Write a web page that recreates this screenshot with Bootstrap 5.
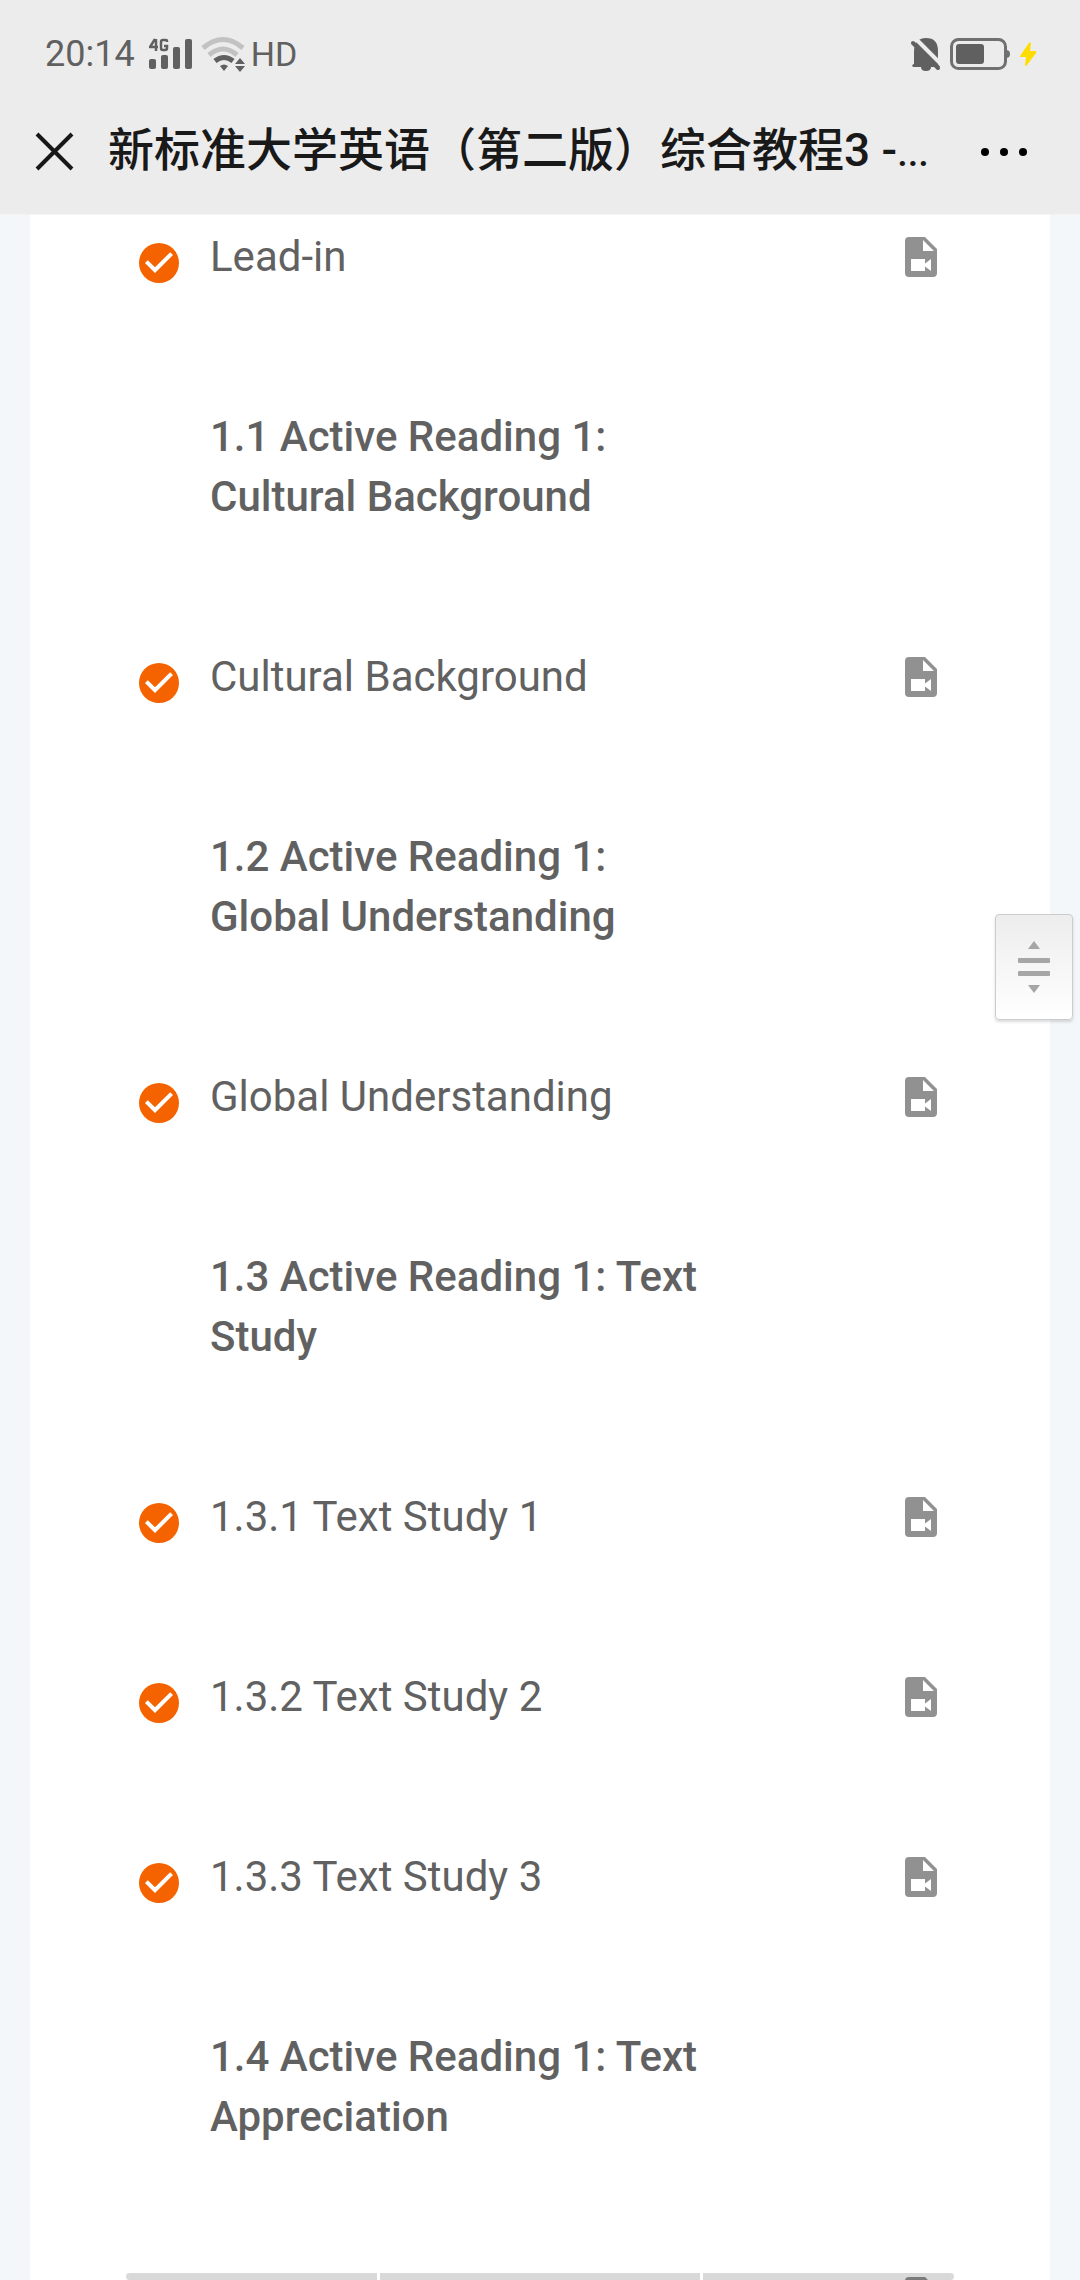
<!DOCTYPE html>
<html lang="zh-CN">
<head>
<meta charset="utf-8">
<meta name="viewport" content="width=device-width, initial-scale=1">
<title>新标准大学英语（第二版）综合教程3</title>
<link rel="stylesheet" href="https://cdn.jsdelivr.net/npm/bootstrap@5.3.0/dist/css/bootstrap.min.css">
<style>
body { font-family: Roboto, "Noto Sans CJK SC", sans-serif; background: #f3f7fa; color: #616161; }
.top-area { background: #ececec; height: 215px; border-bottom: 1px solid #f4f4f4; }
.status-row { height: 108px; padding: 0 43px 0 45px; font-size: 36px; line-height: 60px; color: #606060; }
.status-row svg, .title-row svg, .lesson svg { display: block; flex: none; }
.status-hd { font-size: 34px; margin-left: 6px; }
.signal { margin-left: 14px; }
.title-row { height: 106px; padding: 0 48px 20px 30px; gap: 30px; color: #191919; }
.title-text { font-size: 46px; line-height: 60px; font-weight: 500; margin: 0; }
.title-dots { font-size: 38px; }
.icon-btn { padding: 0; border: 0; background: none; color: #111; }
.course-panel { margin: 0 30px; padding: 12px 105px 0; }
.lesson-list { gap: 120px; font-size: 42px; line-height: 60px; }
.lesson { color: inherit; text-decoration: none; gap: 27px; min-height: 60px; }
.lesson .done { color: #f56200; margin-top: 12px; }
.lesson .media { color: #919191; margin-top: 6px; }
.unit-title { font-size: 42px; line-height: 60px; font-weight: 500; margin: 0; padding: 0 230px 0 75px; }
.drag-handle { position: fixed; right: 7px; top: 914px; width: 78px; height: 106px; padding: 0; border: 1px solid #ccc; border-radius: 4px; background: linear-gradient(#ededed, #fff); box-shadow: 0 2px 3px rgba(0,0,0,.14); }
.gesture-bar { position: fixed; left: 126px; right: 126px; bottom: 0; height: 7px; gap: 3px; }
.gesture-bar span { background: rgba(0,0,0,.15); }
.gesture-bar span:first-child { width: 251px; border-radius: 4px 0 0 4px; }
.gesture-bar span:last-child { width: 251px; border-radius: 0 4px 4px 0; }
</style>
<script src="https://cdn.jsdelivr.net/npm/bootstrap@5.3.0/dist/js/bootstrap.bundle.min.js"></script>
</head>
<body class="vh-100 overflow-hidden d-flex flex-column">
<svg class="d-none" aria-hidden="true">
  <symbol id="i-check" viewBox="0 0 24 24"><path fill="currentColor" d="M12 2a10 10 0 1 0 0 20 10 10 0 0 0 0-20zM10 17l-5-5 1.410-1.410L10 14.170l7.590-7.590L19 8z"/></symbol>
  <symbol id="i-video" viewBox="0 0 24 24"><path fill="currentColor" d="M13 9h5.500L13 3.500V9M6 2h8l6 6v12a2 2 0 0 1-2 2H6a2 2 0 0 1-2-2V4a2 2 0 0 1 2-2m11 17v-6l-3 2.200V13H7v6h7v-2.200l3 2.200z"/></symbol>
</svg>

<header class="top-area flex-shrink-0">
  <div class="status-row d-flex align-items-center justify-content-between">
    <div class="d-flex align-items-center">
      <span>20:14</span>
      <svg class="signal" width="44" height="34" viewBox="0 0 44 34" fill="#606060" aria-hidden="true">
        <rect x="0" y="22" width="7" height="10" rx="2"/><rect x="12" y="18" width="7" height="14" rx="2"/><rect x="24" y="10" width="7" height="22" rx="2"/><rect x="36" y="2" width="7" height="30" rx="2"/>
        <path d="M6 2L1 10h8M7 2v12M18 5V4q0-1-1-1h-3q-2 0-2 2v6q0 2 2 2h2q2 0 2-2V9h-3" fill="none" stroke="#606060" stroke-width="2.500"/>
      </svg>
      <svg class="ms-2" width="44" height="36" viewBox="0 0 44 36" fill="none" stroke-width="5" aria-hidden="true">
        <path d="M2 12Q22-5 42 12" stroke="#c2c2c2"/><path d="M8 19Q22 7 36 19" stroke="#c2c2c2"/><path d="M14 25Q23 18 32 25" stroke="#606060"/>
        <path d="M19 30q4-3 8 0l-4 5zM34 28l5-6 5 6zM34 30h10l-5 6z" fill="#606060"/>
      </svg>
      <span class="status-hd">HD</span>
    </div>
    <div class="d-flex align-items-center">
      <svg width="32" height="36" viewBox="0 0 32 36" fill="#606060" aria-hidden="true">
        <path d="M4 28V16Q4 2 16 2t12 13v13l2 3h-9q0 4-5 4t-5-4H3q-2-2 1-3z"/>
        <path d="M6 3l27 27" stroke="#ececec" stroke-width="4"/><path d="M0 0h6L4 12H0z" fill="#ececec"/><path d="M3 7l25 25" stroke="#606060" stroke-width="4" stroke-linecap="round"/>
      </svg>
      <svg class="ms-2" width="61" height="34" viewBox="0 0 61 34" aria-hidden="true">
        <rect x="1.500" y="2.500" width="54" height="29" rx="7" fill="none" stroke="#707070" stroke-width="3"/><rect x="6" y="7" width="28" height="20" rx="3" fill="#606060"/><path d="M56 13q4 0 4 4t-4 4z" fill="#707070"/>
      </svg>
      <svg class="ms-2" width="18" height="26" viewBox="0 0 18 26" fill="#ffdc00" aria-hidden="true"><path d="M10 2L1 15q-1 1 1 1h5L6 24q1 2 2 0l9-12q1-2-1-2h-5l1-8q-1-1-2 0z"/></svg>
    </div>
  </div>
  <div class="title-row d-flex align-items-center">
    <button class="icon-btn" type="button" aria-label="关闭"><svg width="48" height="48" viewBox="0 0 48 48" fill="none" stroke="#171717" stroke-width="4"><path d="M7 7l35 35M42 7L7 42"/></svg></button>
    <h1 class="title-text flex-grow-1 text-nowrap">新标准大学英语（第二版）综合教程3 -<span class="title-dots">...</span></h1>
    <button class="icon-btn" type="button" aria-label="更多"><svg width="56" height="48" viewBox="0 0 56 48"><circle cx="9" cy="25" r="4"/><circle cx="28" cy="25" r="4"/><circle cx="47" cy="25" r="4"/></svg></button>
  </div>
</header>

<main class="course-panel bg-white flex-grow-1 overflow-hidden">
  <div class="lesson-list d-flex flex-column">
    <a class="lesson d-flex align-items-start" href="#"><svg class="done" width="48" height="48"><use href="#i-check"/></svg><span class="flex-grow-1">Lead-in</span><svg class="media" width="48" height="48"><use href="#i-video"/></svg></a>
    <h2 class="unit-title">1.1 Active Reading 1: Cultural Background</h2>
    <a class="lesson d-flex align-items-start" href="#"><svg class="done" width="48" height="48"><use href="#i-check"/></svg><span class="flex-grow-1">Cultural Background</span><svg class="media" width="48" height="48"><use href="#i-video"/></svg></a>
    <h2 class="unit-title">1.2 Active Reading 1: Global Understanding</h2>
    <a class="lesson d-flex align-items-start" href="#"><svg class="done" width="48" height="48"><use href="#i-check"/></svg><span class="flex-grow-1">Global Understanding</span><svg class="media" width="48" height="48"><use href="#i-video"/></svg></a>
    <h2 class="unit-title">1.3 Active Reading 1: Text Study</h2>
    <a class="lesson d-flex align-items-start" href="#"><svg class="done" width="48" height="48"><use href="#i-check"/></svg><span class="flex-grow-1">1.3.1 Text Study 1</span><svg class="media" width="48" height="48"><use href="#i-video"/></svg></a>
    <a class="lesson d-flex align-items-start" href="#"><svg class="done" width="48" height="48"><use href="#i-check"/></svg><span class="flex-grow-1">1.3.2 Text Study 2</span><svg class="media" width="48" height="48"><use href="#i-video"/></svg></a>
    <a class="lesson d-flex align-items-start" href="#"><svg class="done" width="48" height="48"><use href="#i-check"/></svg><span class="flex-grow-1">1.3.3 Text Study 3</span><svg class="media" width="48" height="48"><use href="#i-video"/></svg></a>
    <h2 class="unit-title">1.4 Active Reading 1: Text Appreciation</h2>
    <a class="lesson d-flex align-items-start justify-content-end" href="#"><svg class="media" width="48" height="48"><use href="#i-video"/></svg></a>
  </div>
</main>

<button class="drag-handle d-flex align-items-center justify-content-center" type="button" aria-label="拖动">
  <svg width="32" height="52" viewBox="0 0 32 52" fill="#a6a6a6"><path d="M10 8l6-8 6 8zM10 44h12l-6 8z"/><rect y="17" width="32" height="5" rx="1"/><rect y="30" width="32" height="5" rx="1"/></svg>
</button>
<div class="gesture-bar d-flex" aria-hidden="true"><span></span><span class="flex-grow-1"></span><span></span></div>
</body>
</html>
